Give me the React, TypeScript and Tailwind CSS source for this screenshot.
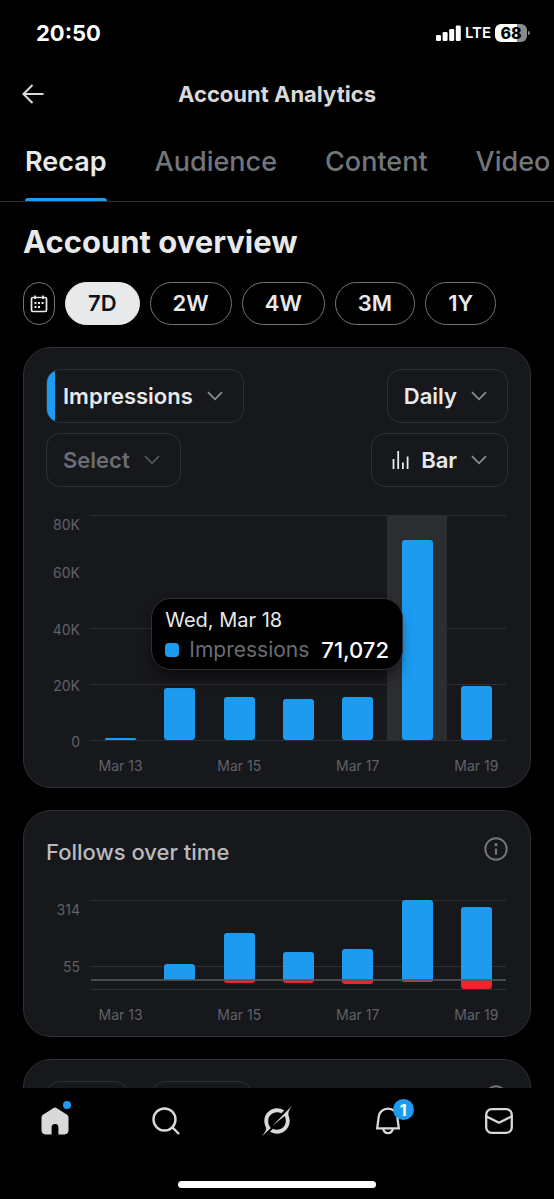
import React, { useState } from 'react';

interface FollowPoint {
  day: string;
  follows: number;
  unfollows: number;
}

interface ImpressionPoint {
  day: string;
  value: number;
}

const TABS = ['Recap', 'Audience', 'Content', 'Video'];
const RANGES = ['7D', '2W', '4W', '3M', '1Y'];

const IMPRESSIONS: ImpressionPoint[] = [
  { day: 'Mar 13', value: 300 },
  { day: 'Mar 14', value: 18500 },
  { day: 'Mar 15', value: 15300 },
  { day: 'Mar 16', value: 14600 },
  { day: 'Mar 17', value: 15300 },
  { day: 'Mar 18', value: 71072 },
  { day: 'Mar 19', value: 19300 },
];

const FOLLOWS: FollowPoint[] = [
  { day: 'Mar 13', follows: 0, unfollows: 0 },
  { day: 'Mar 14', follows: 63, unfollows: 0 },
  { day: 'Mar 15', follows: 184, unfollows: 12 },
  { day: 'Mar 16', follows: 109, unfollows: 12 },
  { day: 'Mar 17', follows: 122, unfollows: 16 },
  { day: 'Mar 18', follows: 314, unfollows: 8 },
  { day: 'Mar 19', follows: 287, unfollows: 36 },
];

const MAX_IMPRESSIONS = 80000;
const MAX_FOLLOWS = 314;
const MAX_UNFOLLOWS = 36;
const FOLLOW_SPAN = MAX_FOLLOWS + MAX_UNFOLLOWS;

const Chevron = ({ className = '' }: { className?: string }) => (
  <svg className={className} width="16" height="10" viewBox="0 0 16 10" fill="none" stroke="currentColor" strokeWidth="1.7">
    <path d="M1 1.2l7 7.2 7-7.2" />
  </svg>
);

const InfoIcon = () => (
  <svg width="24" height="24" viewBox="0 0 24 24" fill="none">
    <circle cx="12" cy="12" r="10.7" stroke="currentColor" strokeWidth="1.9" />
    <circle cx="12" cy="7.7" r="1.6" fill="currentColor" />
    <path d="M12 11.6v6" stroke="currentColor" strokeWidth="2.2" />
  </svg>
);

const StatusBar = () => (
  <div className="flex h-[66px] shrink-0 items-center justify-between pl-9 pr-6">
    <span className="text-[22px] leading-7 font-bold text-white">20:50</span>
    <div className="flex items-center gap-1 text-white">
      <svg width="25" height="18" viewBox="0 0 25 18" fill="currentColor">
        <rect x="0" y="11" width="5" height="6" rx="1.3" />
        <rect x="6.6" y="8" width="5" height="9" rx="1.3" />
        <rect x="13.2" y="5" width="5" height="12" rx="1.3" />
        <rect x="19.8" y="1.5" width="5" height="15.5" rx="1.3" />
      </svg>
      <span className="text-[15px] leading-5 font-semibold">LTE</span>
      <div className="flex items-center gap-px">
        <div className="flex h-[18px] w-8 items-center justify-center rounded-md bg-linear-to-r from-white from-70% to-[#8a8a8a] to-70% text-base font-extrabold text-black">
          68
        </div>
        <div className="h-1 w-0.5 rounded-r-full bg-[#8a8a8a]" />
      </div>
    </div>
  </div>
);

interface DropdownProps {
  label: string;
  options: string[];
  muted?: boolean;
  accent?: boolean;
  icon?: React.ReactNode;
}

const Dropdown: React.FC<DropdownProps> = ({ label, options, muted, accent, icon }) => (
  <div
    className={`relative flex h-[54px] items-center overflow-hidden rounded-[14px] border border-[#2f3036] pl-4 pr-5 ${
      muted ? 'text-[#6b6d72]' : 'text-[#e7e9ea]'
    }`}
  >
    {accent && <span className="absolute inset-y-0 left-0 w-2 bg-[#1d9bf0]" />}
    {icon}
    <select
      aria-label={label}
      className="field-sizing-content appearance-none bg-transparent pr-3.5 text-[22px] leading-7 font-semibold outline-none"
    >
      {options.map(option => (
        <option key={option}>{option}</option>
      ))}
    </select>
    <Chevron className={muted ? 'text-[#55575c]' : 'text-[#8b8d92]'} />
  </div>
);

const DayLabels = ({ days }: { days: string[] }) => (
  <div className="ml-[45px] mr-0.5 flex text-sm leading-5 text-[#5f6166]">
    {days.map((day, i) => (
      <div key={day} className="flex flex-1 basis-0 justify-center">
        {i % 2 === 0 && <span className="-mx-4 whitespace-nowrap">{day}</span>}
      </div>
    ))}
  </div>
);

const ImpressionsChart = () => (
  <div>
    <div className="flex h-[225px] pr-0.5">
      {/* Y axis */}
      <div className="mr-[11px] flex w-[34px] flex-col justify-between text-right text-sm leading-5 text-[#5f6166]">
        <span>80K</span>
        <span>60K</span>
        <span className="pt-2">40K</span>
        <span className="pt-2">20K</span>
        <span className="-mb-3 pt-2">0</span>
      </div>
      {/* Plot */}
      <div className="relative flex flex-1">
        {[0, 50, 75, 100].map(top => (
          <div key={top} className="absolute inset-x-0 h-px bg-[#2f3036]" style={{ top: `${top}%` }} />
        ))}
        {IMPRESSIONS.map(point => (
          <div
            key={point.day}
            className={`relative flex flex-1 items-end justify-center ${point.day === 'Mar 18' ? 'bg-[#2c2d30]' : ''}`}
          >
            <div
              className="min-h-0.5 w-[31px] rounded-[3px] bg-[#1d9bf0]"
              style={{ height: `${(point.value / MAX_IMPRESSIONS) * 100}%` }}
            />
          </div>
        ))}
        {/* Tooltip */}
        <div className="absolute right-[103px] top-[83px] rounded-[20px] border border-[#2f3036] bg-black px-[13px] pb-1 pt-1.5 shadow-lg shadow-black/40">
          <div className="text-xl leading-[30px] text-[#e7e9ea]">Wed, Mar 18</div>
          <div className="flex items-center text-[21px] leading-[30px] whitespace-nowrap">
            <span className="mr-2.5 size-3.5 rounded bg-[#1d9bf0]" />
            <span className="text-[#6b6d72]">Impressions</span>
            <span className="ml-3 text-[22px] font-medium text-white">71,072</span>
          </div>
        </div>
      </div>
    </div>
    <div className="mt-4">
      <DayLabels days={IMPRESSIONS.map(p => p.day)} />
    </div>
  </div>
);

const FollowsChart = () => {
  const fromTop = (value: number) => `${((MAX_FOLLOWS - value) / FOLLOW_SPAN) * 100}%`;

  return (
    <div>
      <div className="flex h-[89px] pr-0.5">
        <div className="mr-[11px] flex w-[34px] flex-col justify-between pb-3 text-right text-sm leading-5 text-[#5f6166]">
          <span>314</span>
          <span>55</span>
        </div>
        <div className="relative flex flex-1">
          {[MAX_FOLLOWS, 55, -MAX_UNFOLLOWS].map(value => (
            <div key={value} className="absolute inset-x-0 h-px bg-[#2f3036]" style={{ top: fromTop(value) }} />
          ))}
          {FOLLOWS.map(point => (
            <div key={point.day} className="relative flex flex-1 flex-col items-center">
              <div style={{ height: fromTop(point.follows) }} />
              <div
                className="w-[31px] rounded-t-[3px] bg-[#1d9bf0]"
                style={{ height: `${(point.follows / FOLLOW_SPAN) * 100}%` }}
              />
              <div
                className="w-[31px] rounded-b-[3px] bg-[#f4212e]"
                style={{ height: `${(point.unfollows / FOLLOW_SPAN) * 100}%` }}
              />
            </div>
          ))}
          <div className="absolute inset-x-0 h-0.5 -translate-y-1/2 bg-[#55575c]/80" style={{ top: fromTop(0) }} />
        </div>
      </div>
      <div className="mt-4">
        <DayLabels days={FOLLOWS.map(p => p.day)} />
      </div>
    </div>
  );
};

const BottomNav = () => (
  <nav className="shrink-0 bg-black text-[#d9d9d9]">
    <div className="grid h-[66px] grid-cols-5 items-center justify-items-center">
      <button type="button" aria-label="Home" className="relative">
        <svg width="28" height="28" viewBox="0 0 28 28" fill="currentColor">
          <path d="M14 .6c.7 0 1.2.2 1.8.6l9.9 6.3c1.1.7 1.8 1.8 1.8 3.1v12.9c0 2.3-1.6 3.900-3.900 3.900h-6.200v-7.100a3.400 3.400 0 0 0-6.800 0v7.100H4.400C2.100 27.400.5 25.800.5 23.500V10.600c0-1.300.7-2.400 1.800-3.100l9.900-6.300C12.800.8 13.300.6 14 .6z" />
        </svg>
        <span className="absolute -right-0.5 -top-1.5 size-2 rounded-full bg-[#1d9bf0]" />
      </button>
      <button type="button" aria-label="Search">
        <svg width="28" height="28" viewBox="0 0 28 28" fill="none" stroke="currentColor" strokeWidth="2.4">
          <circle cx="12.5" cy="12.5" r="11" />
          <path d="M20.4 20.4l6.6 6.6" />
        </svg>
      </button>
      <button type="button" aria-label="Grok">
        <svg width="32" height="32" viewBox="0 0 32 32" fill="currentColor">
          <path d="M23.2 5.400C21 4 18.600 3.300 16 3.300 9 3.300 3.300 9 3.300 16c0 2.600.9 4.800 1.600 6.400.9 2.200-.2 4-4.200 9.100l9.200-8.600C8 21 7.200 18.600 7.200 16c0-4.900 3.900-8.800 8.800-8.800 1.600 0 3 .4 4.400 1.100z" />
          <path d="M31 .8c-2.500 3.700-4.200 6.200-3.300 10.200.7 2 1 3.500 1 5 0 7-5.700 12.700-12.700 12.700-2.600 0-5-.8-7-2.200l3-2.800c1.200.7 2.600 1.100 4 1.100 4.900 0 8.800-3.900 8.800-8.800 0-1.700-.3-3.300-1.100-5L11.500 20.800z" />
        </svg>
      </button>
      <button type="button" aria-label="Notifications" className="relative">
        <svg width="28" height="28" viewBox="0 0 28 28" fill="none" stroke="currentColor" strokeWidth="2.3">
          <path d="M3.2 21.4L4.7 9.7C5.200 5 9.200 1.700 14 1.700s8.800 3.300 9.300 8l1.500 11.700z" />
          <path d="M9.200 21.800c.5 2.700 2.400 4.400 4.800 4.400s4.300-1.700 4.800-4.400" />
        </svg>
        <span className="absolute -right-3 -top-2 flex size-[21px] items-center justify-center rounded-full bg-[#1d9bf0] text-base font-bold text-white">
          1
        </span>
      </button>
      <button type="button" aria-label="Messages">
        <svg width="28" height="28" viewBox="0 0 28 28" fill="none" stroke="currentColor" strokeWidth="2.3">
          <rect x="1.2" y="2.2" width="25.6" height="23.6" rx="5.5" />
          <path d="M1.5 9.5L14 15.8l12.5-6.3" />
        </svg>
      </button>
    </div>
    <div className="flex h-[45px] items-end justify-center pb-[11px]">
      <div className="h-[7px] w-[198px] rounded-full bg-white" />
    </div>
  </nav>
);

export default function App() {
  const [tab, setTab] = useState('Recap');
  const [range, setRange] = useState('7D');

  return (
    <div className="flex h-screen flex-col overflow-hidden bg-black font-['Inter',sans-serif] text-[#e7e9ea]">
      <StatusBar />

      {/* Header */}
      <header className="grid h-14 shrink-0 grid-cols-[1fr_auto_1fr] items-center px-[22px]">
        <button type="button" aria-label="Back" className="justify-self-start text-[#d9d9d9]">
          <svg width="22" height="20" viewBox="0 0 22 20" fill="none" stroke="currentColor" strokeWidth="2.1">
            <path d="M1.5 10h20M10.500 1l-9 9 9 9" />
          </svg>
        </button>
        <h1 className="text-[22px] leading-7 font-bold text-[#d9d9d9]">Account Analytics</h1>
      </header>

      {/* Tabs */}
      <div className="flex h-20 shrink-0 gap-12 overflow-hidden border-b border-[#2f3336] pl-[25px]">
        {TABS.map(name => (
          <button
            key={name}
            type="button"
            onClick={() => setTab(name)}
            className={`relative flex shrink-0 items-center text-[27px] leading-8 ${
              tab === name ? 'font-semibold text-[#e7e9ea]' : 'font-medium text-[#71767b]'
            }`}
          >
            {name}
            {tab === name && <span className="absolute inset-x-0 bottom-0 h-[3px] rounded-t-full bg-[#1d9bf0]" />}
          </button>
        ))}
      </div>

      <main className="min-h-0 flex-1 overflow-hidden px-[23px]">
        <h2 className="pt-5 text-[31px] leading-10 font-bold">Account overview</h2>

        {/* Date range */}
        <div className="mt-5 flex gap-2.5">
          <button
            type="button"
            aria-label="Pick dates"
            className="flex h-[43px] w-8 items-center justify-center rounded-full border border-[#71767b]"
          >
            <svg width="18" height="18" viewBox="0 0 18 18" fill="none" stroke="currentColor" strokeWidth="1.7">
              <rect x="1.5" y="2.5" width="15" height="14" rx="1.4" />
              <path d="M5 .5V4M13 .5V4" />
              <path d="M4.500 8h2M8 8h2M11.500 8h2M4.500 12h2M8 12h2" strokeWidth="2" />
            </svg>
          </button>
          {RANGES.map(name => (
            <button
              key={name}
              type="button"
              onClick={() => setRange(name)}
              className={`h-[43px] rounded-full border px-[22px] text-[22px] font-semibold ${
                range === name ? 'border-[#e7e9ea] bg-[#e7e9ea] text-[#0f1419]' : 'border-[#71767b]'
              }`}
            >
              {name}
            </button>
          ))}
        </div>

        {/* Impressions */}
        <section className="mt-[22px] rounded-[28px] border border-[#2f3036] bg-[#17181c] px-[22px] pb-[11px] pt-[21px]">
          <div className="flex justify-between">
            <Dropdown label="Metric" options={['Impressions']} accent />
            <Dropdown label="Interval" options={['Daily']} />
          </div>
          <div className="mb-7 mt-2.5 flex justify-between">
            <Dropdown label="Second metric" options={['Select']} muted />
            <Dropdown
              label="Chart type"
              options={['Bar']}
              icon={
                <svg className="ml-1 mr-3" width="17" height="18" viewBox="0 0 17 18" fill="none" stroke="currentColor" strokeWidth="1.8">
                  <path d="M1.500 8v10M6.200 0v18M10.900 11.500V18M15.600 5.500V18" />
                </svg>
              }
            />
          </div>
          <ImpressionsChart />
        </section>

        {/* Follows */}
        <section className="mt-[22px] rounded-[28px] border border-[#2f3036] bg-[#17181c] px-[22px] pb-[11px] pt-[26px]">
          <div className="mb-[33px] flex items-start justify-between">
            <h3 className="text-[22px] leading-[30px] font-medium text-[#babbbe]">Follows over time</h3>
            <button type="button" aria-label="About follows" className="text-[#75777b]">
              <InfoIcon />
            </button>
          </div>
          <FollowsChart />
        </section>

        {/* Next card */}
        <section className="mt-[22px] flex items-start gap-[22px] rounded-[28px] border border-[#2f3036] bg-[#17181c] px-[22px] pb-6 pt-[21px]">
          <div className="h-[54px] w-[83px] rounded-[14px] border border-[#2f3036]" />
          <div className="h-[54px] w-[101px] rounded-[14px] border border-[#2f3036]" />
          <button type="button" aria-label="About posts" className="ml-auto mt-1 text-[#75777b]">
            <InfoIcon />
          </button>
        </section>
      </main>

      <BottomNav />
    </div>
  );
}
